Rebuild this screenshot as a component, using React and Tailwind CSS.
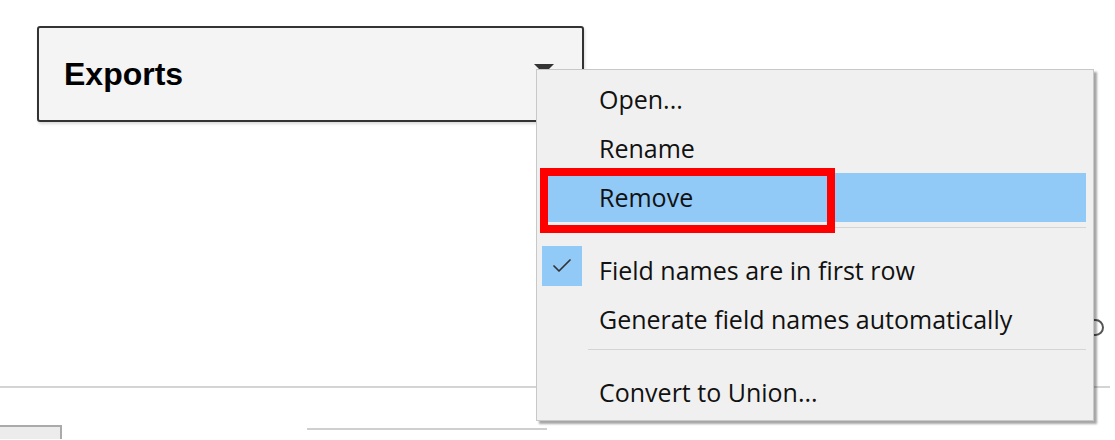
import { Check } from 'lucide-react'

const menuFont = { fontFamily: '"Open Sans", "Noto Sans", sans-serif' }

function MenuItem({ label, active, checked }) {
  return (
    <div className={`relative flex h-[49px] items-center ${active ? 'ml-[4px] mr-[7px] bg-[#91c9f7]' : ''}`}>
      {checked && (
        <div className="absolute left-[5px] top-[0px] flex h-[40px] w-[40px] items-center justify-center bg-[#91c9f7]">
          <Check size={24} strokeWidth={1.75} className="text-[#333]" />
        </div>
      )}
      <span className={`text-[25px] leading-none text-[#111] ${active ? 'pl-[58px]' : 'pl-[62px]'}`}>{label}</span>
    </div>
  )
}

function Separator() {
  return (
    <div className="h-[24px] pt-[5px] pl-[51px] pr-[7px]">
      <div className="h-px bg-[#d5d5d5]" />
    </div>
  )
}

export default function App() {
  return (
    <div className="relative h-[440px] w-[1115px] overflow-hidden bg-white">
      {/* Exports card */}
      <div className="pt-[26px] pl-[37px]">
        <div className="relative flex h-[96px] w-[547px] items-center rounded-[3px] border-2 border-[#333] bg-[#f4f4f4] pl-[25px] shadow-[1px_2px_3px_rgba(0,0,0,0.15)]">
          <span className="text-[32px] font-bold text-black" style={{ fontFamily: '"Liberation Sans", Arial, sans-serif' }}>Exports</span>
          <div className="absolute left-[495px] top-[36px] h-0 w-0 border-x-[10px] border-t-[10px] border-x-transparent border-t-[#333]" />
        </div>
      </div>

      {/* background lines */}
      <div className="mt-[264px] h-[2px] w-[1110px] bg-[#d4d4d4]" />
      <div className="mt-[37px] flex items-start">
        <div className="h-[14px] w-[62px] border-t-2 border-r-2 border-[#aaa] bg-[#ececec]" />
        <div className="ml-[245px] mt-[3px] h-[2px] w-[240px] bg-[#cfcfcf]" />
      </div>

      {/* partial glyph behind menu */}
      <div className="absolute left-[1090px] top-[319px] h-[17px] w-[14px] rounded-r-full border-2 border-[#555]" />

      {/* context menu */}
      <div
        className="absolute left-[536px] top-[69px] h-[352px] w-[558px] border border-[#c8c8c8] bg-[#f0f0f0] pt-[5px] shadow-[3px_3px_2px_rgba(0,0,0,0.35)]"
        style={menuFont}
      >
        <MenuItem label="Open..." />
        <MenuItem label="Rename" />
        <MenuItem label="Remove" active />
        <Separator />
        <MenuItem label="Field names are in first row" checked />
        <MenuItem label="Generate field names automatically" />
        <Separator />
        <MenuItem label="Convert to Union..." />
      </div>

      {/* red annotation */}
      <div className="absolute left-[540px] top-[168px] h-[65px] w-[295px] border-[8px] border-[#ff0000]" />
    </div>
  )
}
